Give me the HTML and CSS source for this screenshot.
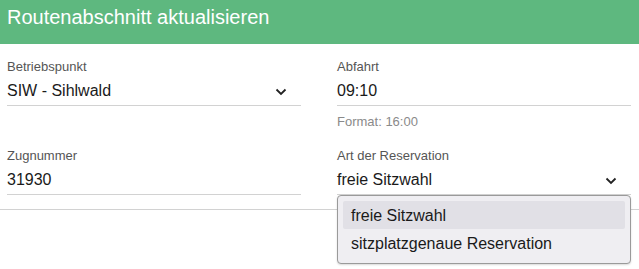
FILE: index.html
```html
<!DOCTYPE html>
<html lang="de">
<head>
  <meta charset="UTF-8" />
  <meta name="viewport" content="width=device-width, initial-scale=1.0" />
  <title>Routenabschnitt aktualisieren</title>
  <link rel="stylesheet" href="styles.css">
</head>
<body>
  <div class="dialog">
    <div class="header">Routenabschnitt aktualisieren</div>
    <div class="form">
      <div class="field">
        <div class="label">Betriebspunkt</div>
        <div class="control select">
          <span>SIW - Sihlwald</span>
          <svg class="chevron" width="12" height="8" viewBox="0 0 12 8"><path d="M1.5 1.5 L6 6 L10.5 1.5" fill="none" stroke="#222" stroke-width="1.8"/></svg>
        </div>
      </div>
      <div class="field">
        <div class="label">Abfahrt</div>
        <div class="control"><span>09:10</span></div>
        <div class="hint">Format: 16:00</div>
      </div>
      <div class="field">
        <div class="label">Zugnummer</div>
        <div class="control"><span>31930</span></div>
      </div>
      <div class="field open">
        <div class="label">Art der Reservation</div>
        <div class="control select">
          <span>freie Sitzwahl</span>
          <svg class="chevron" width="12" height="8" viewBox="0 0 12 8"><path d="M1.5 1.5 L6 6 L10.5 1.5" fill="none" stroke="#222" stroke-width="1.8"/></svg>
        </div>
        <div class="menu">
          <div class="option selected">freie Sitzwahl</div>
          <div class="option">sitzplatzgenaue Reservation</div>
        </div>
      </div>
    </div>
  </div>
</body>
</html>
```

FILE: styles.css
```css
html, body {
  height: 100%;
}
body {
  margin: 0;
  font-family: "Liberation Sans", Arial, sans-serif;
  background: #fff;
  color: #222;
}
.dialog {
  min-height: 269px;
}
.header {
  background: #5eb87f;
  color: #fff;
  font-size: 20px;
  height: 44px;
  line-height: 35px;
  padding-left: 7px;
}
.form {
  display: grid;
  grid-template-columns: 294px 294px;
  column-gap: 36px;
  row-gap: 16px;
  padding: 14px 8px 14px 7px;
  border-bottom: 1px solid #d2d2d2;
}
.field {
  position: relative;
}
.label {
  font-size: 13px;
  line-height: 18px;
  color: #555;
}
.control {
  display: flex;
  align-items: center;
  justify-content: space-between;
  font-size: 16px;
  height: 28px;
  padding-top: 1px;
  border-bottom: 1px solid #d2d2d2;
  color: #1a1a1a;
}
.chevron {
  margin-right: 14px;
  margin-top: 2px;
}
.hint {
  font-size: 13px;
  line-height: 18px;
  margin-top: 7px;
  color: #8a8a8a;
}
.menu {
  position: absolute;
  z-index: 5;
  left: 0;
  right: 0;
  top: 48px;
  background: #efeef2;
  border: 1px solid #9a9a9a;
  border-radius: 4px;
  box-shadow: 0 1px 2px rgba(0,0,0,0.15);
  padding: 5px 5px 6px;
}
.option {
  font-size: 16px;
  height: 28px;
  line-height: 29px;
  padding-left: 8px;
  color: #1a1a1a;
  border-radius: 2px;
}
.option.selected {
  background: #e1e0e6;
}
```
